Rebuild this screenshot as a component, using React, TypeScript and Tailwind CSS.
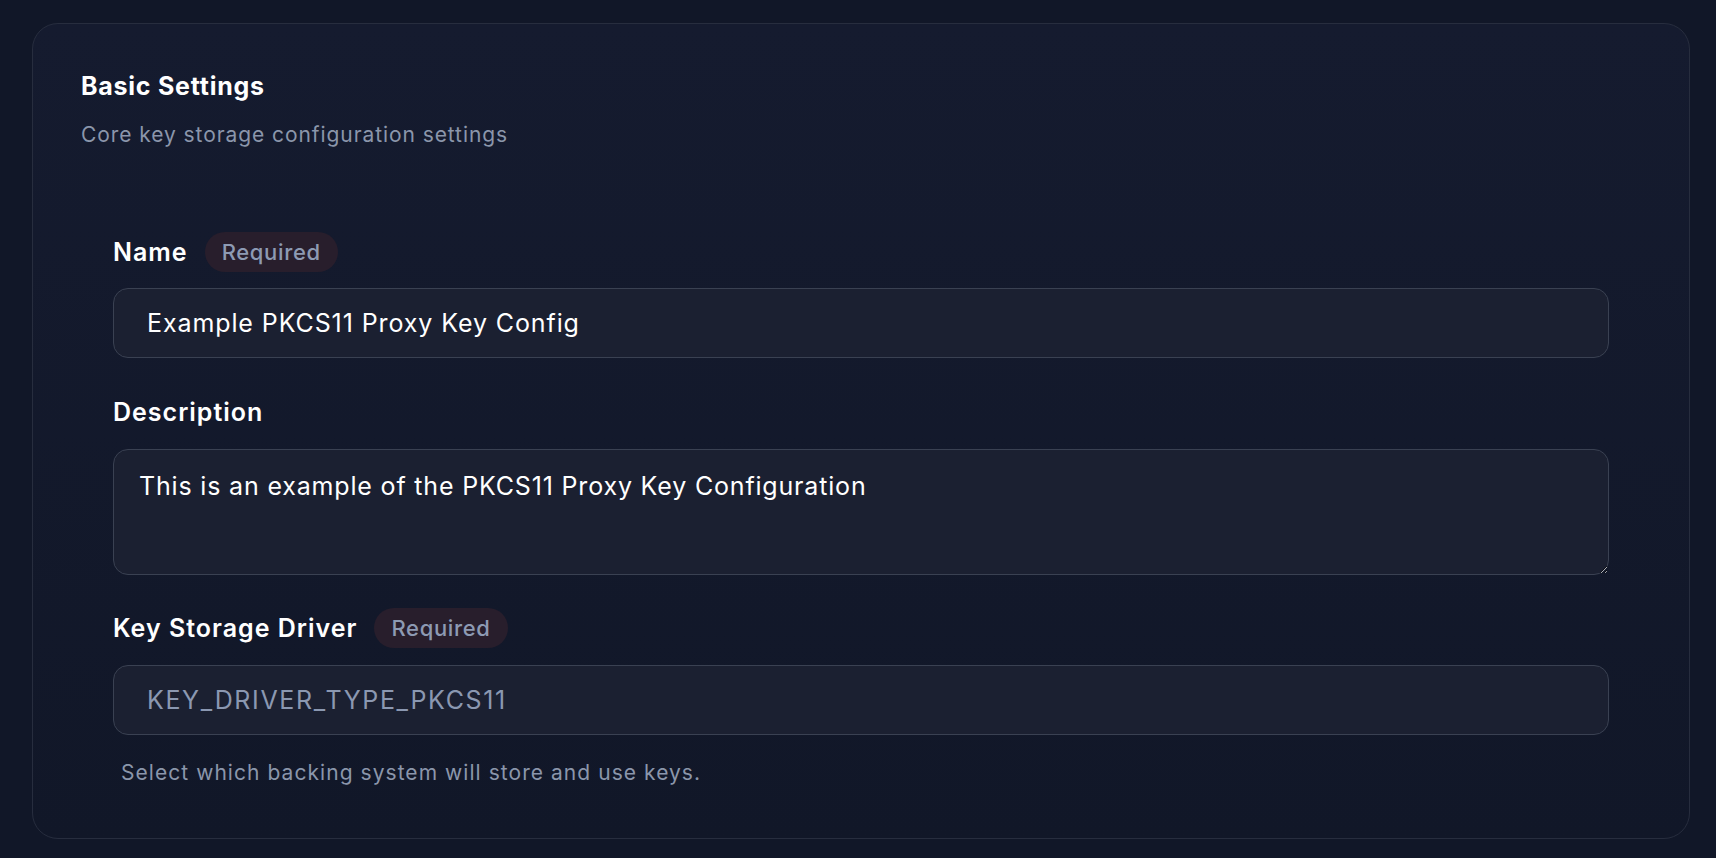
import React from "react";

const font = { fontFamily: "Inter, 'Noto Sans', sans-serif" };

const RequiredBadge = () => (
  <span className="inline-flex h-[40px] items-center rounded-full bg-[#281e2c] px-[17px] text-[22px] font-medium leading-[30px] tracking-[0.03em] text-[#8d9ab3]">
    Required
  </span>
);

const FieldLabel = ({ children, required }: { children: React.ReactNode; required?: boolean }) => (
  <div className="flex h-[40px] items-center gap-[17px]">
    <span className="text-[25px] font-semibold leading-[30px] tracking-[0.04em] text-white">{children}</span>
    {required && <RequiredBadge />}
  </div>
);

export default function App() {
  return (
    <div className="min-h-screen bg-[#111728] pt-[23px] pb-[18px]" style={font}>
      <section className="ml-[32px] mr-[26px] rounded-[26px] border border-[#272d3e] bg-gradient-to-b from-[#151b2f] to-[#111728] pl-[48px] pr-[44px] pt-[47px] pb-[50px]">
        {/* header */}
        <h2 className="text-[25px] font-bold leading-[30px] tracking-[0.03em] text-white">Basic Settings</h2>
        <p className="mt-[19px] text-[21px] leading-[30px] tracking-[0.044em] text-[#8b96ab]">
          Core key storage configuration settings
        </p>

        <div className="mt-[82px] pl-[32px] pr-[36px]">
          {/* name */}
          <FieldLabel required>Name</FieldLabel>
          <input
            readOnly
            value="Example PKCS11 Proxy Key Config"
            className="mt-[16px] block h-[70px] w-full rounded-[15px] border border-[#3a4152] bg-[#1b2031] pl-[33px] pr-[33px] text-[25px] tracking-[0.036em] text-white outline-none"
          />

          {/* description */}
          <div className="mt-[34px]">
            <FieldLabel>Description</FieldLabel>
          </div>
          <textarea
            readOnly
            value="This is an example of the PKCS11 Proxy Key Configuration"
            className="mt-[17px] block h-[126px] w-full rounded-[15px] border border-[#3a4152] bg-[#1b2031] px-[25px] pt-[21px] text-[25px] leading-[30px] tracking-[0.033em] text-white outline-none [color-scheme:dark]"
          />

          {/* driver */}
          <div className="mt-[33px]">
            <FieldLabel required>Key Storage Driver</FieldLabel>
          </div>
          <input
            readOnly
            value="KEY_DRIVER_TYPE_PKCS11"
            className="mt-[17px] block h-[70px] w-full rounded-[15px] border border-[#3a4152] bg-[#1b2031] pl-[33px] pr-[33px] text-[25px] tracking-[0.066em] text-[#8b98b1] outline-none"
          />
          <p className="mt-[23px] pl-[8px] text-[21px] leading-[30px] tracking-[0.05em] text-[#8b96ab]">
            Select which backing system will store and use keys.
          </p>
        </div>
      </section>
    </div>
  );
}
